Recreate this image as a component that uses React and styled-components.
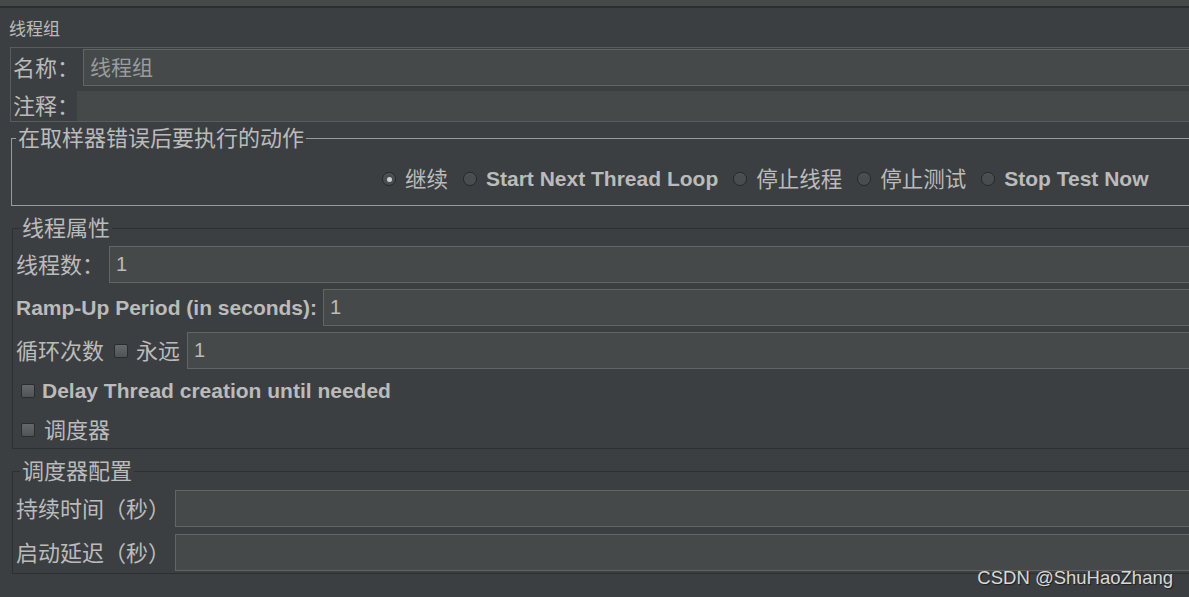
import React from "react";
import styled, { createGlobalStyle } from "styled-components";

const GlobalStyle = createGlobalStyle`
  html, body {
    margin: 0;
    padding: 0;
    background: #3c3f41;
    overflow: hidden;
  }
  body {
    font-family: "Noto Sans CJK SC", "Liberation Sans", sans-serif;
    color: #bbbbbb;
  }
`;

const cjk = '"Noto Sans CJK SC", sans-serif';
const latin = '"Liberation Sans", Arial, sans-serif';

const Page = styled.div`
  position: relative;
  width: 1189px;
  height: 597px;
  overflow: hidden;
  background: #3c3f41;
`;

const TopBand = styled.div`
  height: 6px;
  background: #45494a;
  border-bottom: 2px solid #2b2d2e;
`;

const Body = styled.div`
  width: 1230px;
  padding-left: 10px;
  display: flex;
  flex-direction: column;
`;

const Title = styled.div`
  height: 39px;
  line-height: 40px;
  font-size: 17px;
  margin-left: -1px;
`;

const NamePanel = styled.div`
  border: 1px solid #5a5d5f;
  border-right: none;
  display: flex;
  flex-direction: column;
  gap: 5px;
  padding-top: 1px;
`;

const Row = styled.div`
  display: flex;
  align-items: center;
  height: ${(p) => p.$h || 37}px;
`;

const Label = styled.span`
  font-size: ${(p) => (p.$bold ? 21 : 22)}px;
  line-height: 28px;
  white-space: nowrap;
  box-sizing: border-box;
  width: ${(p) => (p.$w ? `${p.$w}px` : "auto")};
  flex: none;
  padding-left: ${(p) => p.$pl || 0}px;
  padding-bottom: ${(p) => (p.$bold ? 0 : 4)}px;
  font-weight: ${(p) => (p.$bold ? 700 : 400)};
  font-family: ${(p) => (p.$bold ? latin : cjk)};
`;

const Input = styled.div`
  flex: 1;
  height: 100%;
  box-sizing: border-box;
  background: #45494a;
  border: ${(p) => (p.$flat ? "none" : "1px solid #646464")};
  display: flex;
  align-items: center;
  padding-left: 6px;
  padding-bottom: ${(p) => (p.$mono ? 0 : 3)}px;
  font-size: ${(p) => (p.$mono ? 20 : 21)}px;
  color: ${(p) => (p.$muted ? "#9a9c9d" : "#bbbbbb")};
  font-family: ${(p) => (p.$mono ? latin : cjk)};
`;

const Group = styled.fieldset`
  margin: ${(p) => p.$mt || 0}px 0 0 ${(p) => p.$ml || 0}px;
  padding: ${(p) => p.$pad || "0 0 0 3px"};
  border: 1px solid ${(p) => p.$line || "#2d2f30"};
  border-right: none;
  min-width: 0;
  display: flex;
  flex-direction: column;
`;

const Legend = styled.legend`
  font-size: 22px;
  padding: 0 2px;
  margin-left: 4px;
  line-height: 20px;
  height: 24px;
  box-sizing: border-box;
  color: #bbbbbb;
  font-family: ${cjk};
`;

const RadioRow = styled.div`
  display: flex;
  align-items: center;
  height: 48px;
  padding: 5px 0 2px 370px;
  gap: 15px;
`;

const RadioItem = styled.label`
  display: flex;
  align-items: center;
  gap: 9px;
  font-size: ${(p) => (p.$bold ? 21 : 21.5)}px;
  white-space: nowrap;
  font-weight: ${(p) => (p.$bold ? 700 : 400)};
  font-family: ${(p) => (p.$bold ? latin : cjk)};
`;

const ItemText = styled.span`
  padding-bottom: ${(p) => (p.$bold ? 0 : 3)}px;
`;

const RadioDot = styled.span`
  width: 14px;
  height: 14px;
  flex: none;
  border-radius: 50%;
  box-sizing: border-box;
  background: #4a4d50;
  border: 1px solid #25272a;
  box-shadow: inset 0 1px 0 #585b5e;
  display: flex;
  align-items: center;
  justify-content: center;
  &::after {
    content: "";
    width: 5px;
    height: 5px;
    border-radius: 50%;
    background: ${(p) => (p.$on ? "#d0d0d0" : "transparent")};
  }
`;

const Box = styled.span`
  width: 14px;
  height: 14px;
  box-sizing: border-box;
  flex: none;
  background: linear-gradient(#66696b, #505355);
  border: 1px solid #2a2c2d;
  border-radius: 2px;
  margin: ${(p) => p.$m || "0 7px 0 0"};
`;

const CheckRow = styled.div`
  display: flex;
  align-items: center;
  height: ${(p) => p.$h || 39}px;
  padding-left: 5px;
`;

const Rows = styled.div`
  display: flex;
  flex-direction: column;
  gap: ${(p) => p.$gap || 6}px;
  padding-top: ${(p) => p.$pt || 0}px;
`;

const Watermark = styled.div`
  position: absolute;
  right: 16px;
  bottom: 8px;
  font-family: ${latin};
  font-size: 18.5px;
  color: #d9d9d9;
  text-shadow: 1px 1px 1px #1e1e1e;
`;

const actions = [
  { text: "继续", on: true },
  { text: "Start Next Thread Loop", bold: true },
  { text: "停止线程" },
  { text: "停止测试" },
  { text: "Stop Test Now", bold: true },
];

export default function App() {
  return (
    <Page>
      <GlobalStyle />
      <TopBand />
      <Body>
        <Title>线程组</Title>
        <NamePanel>
          <Row $h={37}>
            <Label $w={72} $pl={2}>名称：</Label>
            <Input $muted>线程组</Input>
          </Row>
          <Row $h={30}>
            <Label $w={66} $pl={2}>注释：</Label>
            <Input $flat />
          </Row>
        </NamePanel>

        <Group $mt={4} $ml={1} $line="#9a9a9a" $pad="0">
          <Legend>在取样器错误后要执行的动作</Legend>
          <RadioRow>
            {actions.map((a) => (
              <RadioItem key={a.text} $bold={a.bold}>
                <RadioDot $on={a.on} />
                <ItemText $bold={a.bold}>{a.text}</ItemText>
              </RadioItem>
            ))}
          </RadioRow>
        </Group>

        <Group $mt={10} $ml={2}>
          <Legend>线程属性</Legend>
          <Rows $pt={6}>
            <Row>
              <Label $w={93}>线程数：</Label>
              <Input $mono>1</Input>
            </Row>
            <Row>
              <Label $bold $w={307}>Ramp-Up Period (in seconds):</Label>
              <Input $mono>1</Input>
            </Row>
            <Row>
              <Label>循环次数</Label>
              <Box $m="0 8px 0 10px" />
              <Label $w={51}>永远</Label>
              <Input $mono>1</Input>
            </Row>
          </Rows>
          <CheckRow $h={43}>
            <Box />
            <Label $bold>Delay Thread creation until needed</Label>
          </CheckRow>
          <CheckRow $h={36}>
            <Box $m="0 9px 0 0" />
            <Label>调度器</Label>
          </CheckRow>
        </Group>

        <Group $mt={10} $ml={2} $pad="0 0 2px 3px">
          <Legend>调度器配置</Legend>
          <Rows $pt={7} $gap={7}>
            <Row $h={37}>
              <Label $w={159}>持续时间（秒）</Label>
              <Input />
            </Row>
            <Row $h={37}>
              <Label $w={159}>启动延迟（秒）</Label>
              <Input />
            </Row>
          </Rows>
        </Group>
      </Body>
      <Watermark>CSDN @ShuHaoZhang</Watermark>
    </Page>
  );
}
